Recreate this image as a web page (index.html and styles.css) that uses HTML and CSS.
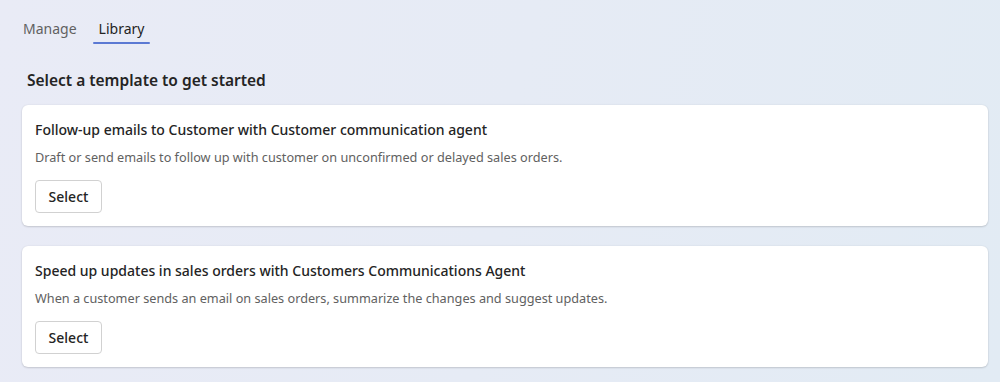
FILE: index.html
```html
<!DOCTYPE html>
<html>
<head>
<meta charset="utf-8">
<link rel="stylesheet" href="styles.css">
</head>
<body>
<div class="page">
  <nav class="tabs">
    <span class="tab">Manage</span>
    <span class="tab active">Library</span>
  </nav>
  <h2 class="heading">Select a template to get started</h2>
  <div class="cards">
    <div class="card">
      <div class="card-title">Follow-up emails to Customer with Customer communication agent</div>
      <div class="card-desc">Draft or send emails to follow up with customer on unconfirmed or delayed sales orders.</div>
      <button class="btn">Select</button>
    </div>
    <div class="card">
      <div class="card-title">Speed up updates in sales orders with Customers Communications Agent</div>
      <div class="card-desc">When a customer sends an email on sales orders, summarize the changes and suggest updates.</div>
      <button class="btn">Select</button>
    </div>
  </div>
</div>
</body>
</html>
```
FILE: styles.css
```css
html, body {
  margin: 0;
  padding: 0;
  height: 100%;
}
body {
  background: linear-gradient(100deg, #e9ebf6 0%, #e6ebf5 50%, #e2ebf4 100%);
  font-family: "Noto Sans", "Open Sans", sans-serif;
  color: #242424;
}
.page {
  padding: 16px 12px 0 22px;
}
.tabs {
  display: flex;
  height: 28px;
}
.tab {
  font-size: 14px;
  color: #616161;
  padding: 3px 7px 0 1px;
  position: relative;
  margin-right: 9px;
}
.tab.active {
  color: #242424;
  padding: 3px 6px 0 6px;
}
.tab.active::after {
  content: "";
  position: absolute;
  left: 0;
  right: 0;
  bottom: 0;
  height: 2px;
  border-radius: 1px;
  background: #5b79d3;
}
.heading {
  margin: 26px 0 15px 5px;
  font-size: 15.5px;
  font-weight: 600;
  line-height: 20px;
}
.cards {
  display: flex;
  flex-direction: column;
  gap: 20px;
}
.card {
  background: #fff;
  border-radius: 6px;
  box-shadow: 0 1px 2px rgba(0,0,0,0.14), 0 0 2px rgba(0,0,0,0.08);
  padding: 15px 13px 13px 13px;
  height: 93px;
}
.card-title {
  font-size: 14px;
  font-weight: 500;
  line-height: 20px;
}
.card-desc {
  font-size: 12.7px;
  color: #616161;
  line-height: 18px;
  margin-top: 8px;
}
.btn {
  margin-top: 14px;
  height: 33px;
  width: 67px;
  background: #fff;
  border: 1px solid #d1d1d1;
  border-radius: 4px;
  font-family: inherit;
  font-size: 14px;
  font-weight: 500;
  color: #242424;
  padding: 0;
}
```
